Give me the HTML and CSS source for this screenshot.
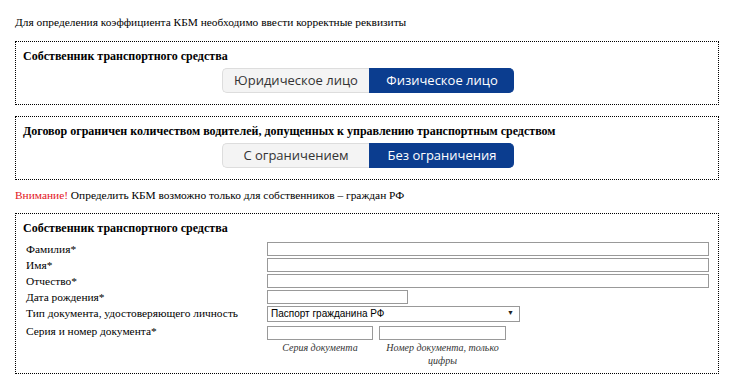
FILE: index.html
```html
<!DOCTYPE html>
<html lang="ru">
<head>
  <meta charset="UTF-8" />
  <title>Расчет КБМ</title>
  <link rel="stylesheet" href="styles.css">
</head>
<body>

<div class="wrap">
  <p class="intro">Для определения коэффициента КБМ необходимо ввести корректные реквизиты</p>

  <!-- тип собственника -->
  <div class="box">
    <div class="box-title">Собственник транспортного средства</div>
    <div class="toggle">
      <span class="toggle-btn">Юридическое лицо</span>
      <span class="toggle-btn active">Физическое лицо</span>
    </div>
  </div>

  <!-- ограничение водителей -->
  <div class="box">
    <div class="box-title">Договор ограничен количеством водителей, допущенных к управлению транспортным средством</div>
    <div class="toggle">
      <span class="toggle-btn">С ограничением</span>
      <span class="toggle-btn active">Без ограничения</span>
    </div>
  </div>

  <p class="warning"><span class="red">Внимание!</span> Определить КБМ возможно только для собственников – граждан РФ</p>

  <!-- данные собственника -->
  <div class="box owner">
    <div class="box-title">Собственник транспортного средства</div>
    <div class="form">
      <label>Фамилия*</label>
      <input type="text" class="full" />

      <label>Имя*</label>
      <input type="text" class="full" />

      <label>Отчество*</label>
      <input type="text" class="full" />

      <label>Дата рождения*</label>
      <input type="text" class="date" />

      <label>Тип документа, удостоверяющего личность</label>
      <div class="select">
        <select>
          <option>Паспорт гражданина РФ</option>
        </select>
      </div>

      <label>Серия и номер документа*</label>
      <div class="doc">
        <div class="doc-col series">
          <input type="text" />
          <div class="hint">Серия документа</div>
        </div>
        <div class="doc-col number">
          <input type="text" />
          <div class="hint">Номер документа, только цифры</div>
        </div>
      </div>
    </div>
  </div>
</div>

</body>
</html>
```

FILE: styles.css
```css
body {
  margin: 0;
  padding: 14px 15px;
  font-family: "Liberation Serif", "Times New Roman", serif;
  font-size: 11.4px;
  color: #000;
  background: #fff;
}
.wrap {
  width: 704px;
}
.intro {
  margin: 0 0 11px;
  line-height: 16px;
}
.box {
  border: 1px dotted #000;
  padding: 7px 9px 11px 7px;
}
.box + .box {
  margin-top: 11px;
}
.box-title {
  font-weight: bold;
  font-size: 12px;
  line-height: 15px;
}
.toggle {
  display: flex;
  justify-content: center;
  margin-top: 4px;
  padding-left: 4px;
}
.toggle-btn {
  width: 147px;
  height: 25px;
  box-sizing: border-box;
  line-height: 23px;
  text-align: center;
  font-family: "Open Sans", "DejaVu Sans", sans-serif;
  font-size: 13px;
  color: #333;
  background: #f4f4f4;
  border: 1px solid #ddd;
  border-right: none;
  border-radius: 5px 0 0 5px;
}
.toggle-btn.active {
  width: 145px;
  color: #fff;
  background: #0b3d8f;
  border-color: #0b3d8f;
  border-radius: 0 5px 5px 0;
}
.warning {
  margin: 7px 0 10px;
  line-height: 16px;
}
.red {
  color: #e3141b;
}
.owner {
  padding-bottom: 6px;
}
.form {
  display: grid;
  grid-template-columns: 244px 1fr;
  row-gap: 2px;
  margin-top: 6px;
}
.form label {
  padding-left: 3px;
  line-height: 14px;
}
.form input {
  box-sizing: border-box;
  height: 14px;
  margin: 0;
  padding: 0 3px;
  border: 1px solid #999;
  font-size: 11px;
}
.form input.full {
  width: 100%;
}
.form input.date {
  width: 141px;
}
.select {
  position: relative;
  width: 253px;
}
.select select {
  -webkit-appearance: none;
  appearance: none;
  box-sizing: border-box;
  width: 100%;
  height: 16px;
  margin: 0;
  padding: 0 3px;
  border: 1px solid #999;
  border-radius: 0;
  background: #fff;
  font-family: "Liberation Sans", Arial, sans-serif;
  font-size: 10px;
  line-height: 14px;
  color: #000;
}
.select::after {
  content: "▼";
  position: absolute;
  right: 6px;
  top: 3px;
  font-size: 7px;
  line-height: 9px;
  color: #222;
  pointer-events: none;
}
.doc {
  display: flex;
  gap: 6px;
  margin-top: 2px;
}
.doc-col input {
  width: 100%;
}
.series {
  width: 106px;
}
.number {
  width: 127px;
}
.hint {
  margin-top: 1px;
  text-align: center;
  font-style: italic;
  font-size: 10px;
  line-height: 13px;
  color: #333;
}
```
